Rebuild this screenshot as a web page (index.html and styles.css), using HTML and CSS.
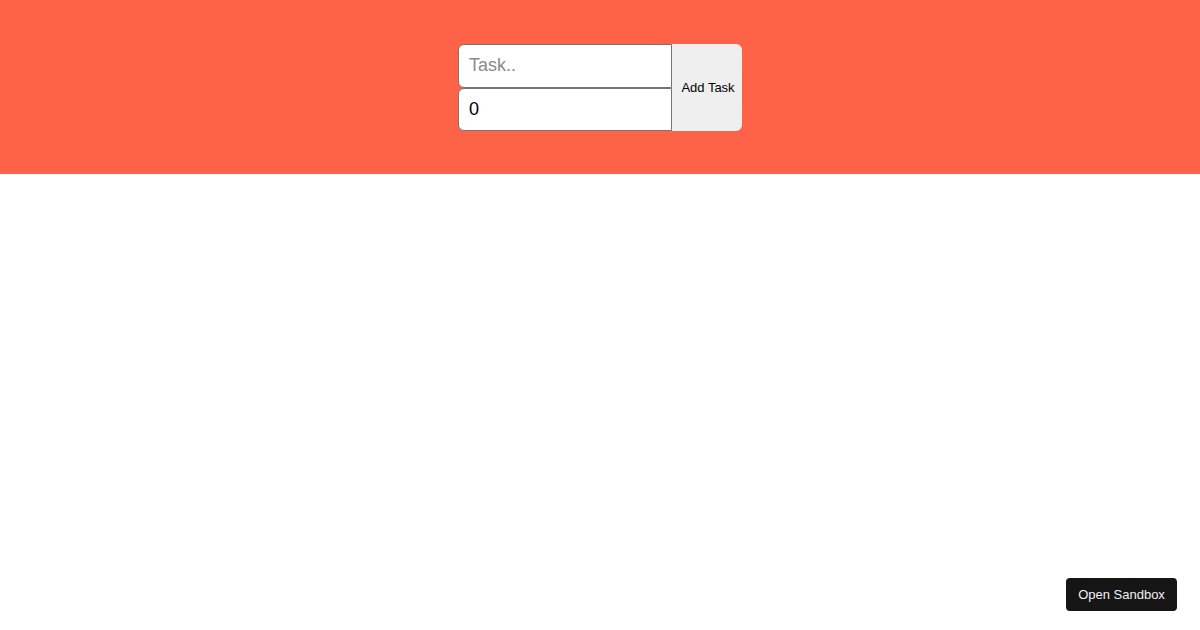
FILE: index.html
```html
<!DOCTYPE html>
<html>
<head>
<meta charset="utf-8">
<link rel="stylesheet" href="styles.css">
</head>
<body>
<header class="header">
  <form class="task-form">
    <div class="fields">
      <input class="field" type="text" placeholder="Task..">
      <input class="field" type="text" value="0">
    </div>
    <button class="add-btn" type="button">Add Task</button>
  </form>
</header>
<main class="list"></main>
<a class="sandbox-btn">Open Sandbox</a>
</body>
</html>
```
FILE: styles.css
```css
html, body {
  margin: 0;
  padding: 0;
  background: #ffffff;
  font-family: "Liberation Sans", Arial, sans-serif;
}
.header {
  background: #ff6347;
  height: 174px;
  box-sizing: border-box;
  padding-top: 44px;
  display: flex;
  justify-content: center;
  align-items: flex-start;
}
.task-form {
  display: flex;
  margin: 0;
}
.fields {
  display: flex;
  flex-direction: column;
}
.field {
  width: 214px;
  height: 43.5px;
  box-sizing: border-box;
  border: 1px solid #767676;
  border-radius: 6px 0 0 6px;
  padding: 0 10px;
  font-family: "Liberation Sans", Arial, sans-serif;
  font-size: 18px;
  color: #000;
  background: #fff;
  outline: none;
}
.field::placeholder {
  color: #8a8a8a;
}
.add-btn {
  width: 70px;
  height: 87px;
  box-sizing: border-box;
  border: none;
  border-radius: 0 6px 6px 0;
  background: #efefef;
  font-family: "Liberation Sans", Arial, sans-serif;
  font-size: 13px;
  color: #000;
  padding: 0 0 0 2px;
}
.sandbox-btn {
  position: fixed;
  right: 23px;
  bottom: 19px;
  width: 111px;
  height: 33px;
  display: flex;
  align-items: center;
  justify-content: center;
  background: #151515;
  color: #f2f2f2;
  border-radius: 4px;
  font-size: 13px;
  font-family: "Liberation Sans", Arial, sans-serif;
}
```
